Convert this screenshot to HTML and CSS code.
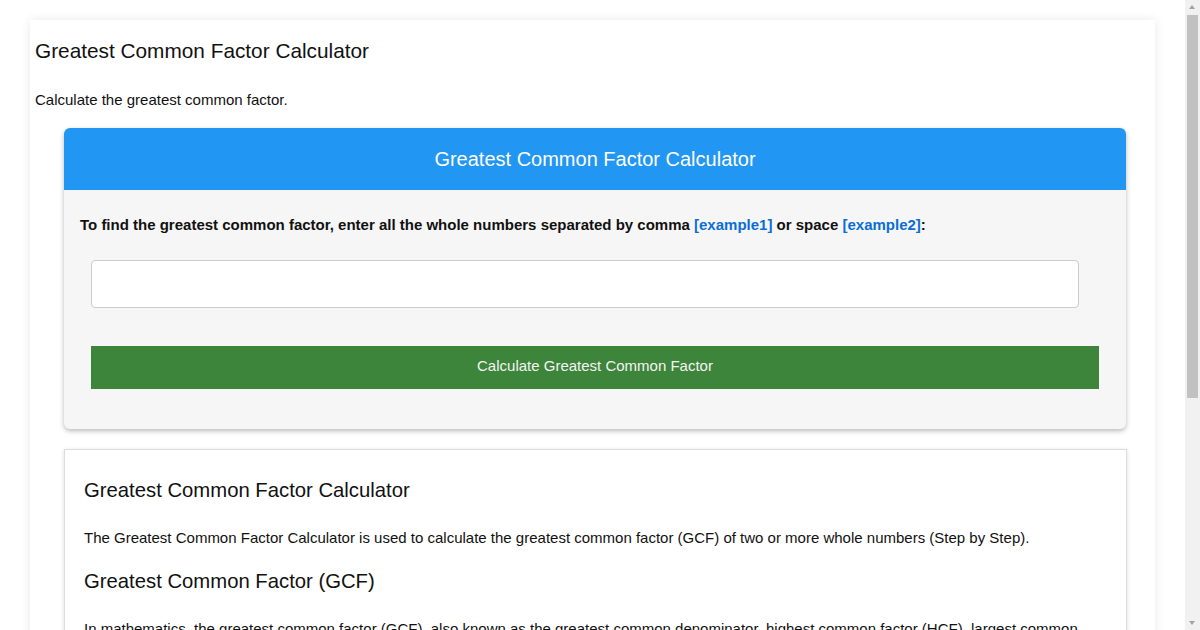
FILE: index.html
```html
<!DOCTYPE html>
<html lang="en">
<head>
<meta charset="utf-8">
<title>Greatest Common Factor Calculator</title>
<link rel="stylesheet" href="styles.css">
</head>
<body>
<div class="page">
  <h1 class="page-title">Greatest Common Factor Calculator</h1>
  <p class="intro">Calculate the greatest common factor.</p>

  <div class="calc-card">
    <div class="calc-header">Greatest Common Factor Calculator</div>
    <div class="calc-body">
      <p class="calc-label">To find the greatest common factor, enter all the whole numbers separated by comma <a href="#" class="ex-link">[example1]</a> or space <a href="#" class="ex-link">[example2]</a>:</p>
      <div class="calc-form">
        <input type="text" class="calc-input">
        <button type="button" class="calc-button">Calculate Greatest Common Factor</button>
      </div>
    </div>
  </div>

  <div class="info-box">
    <h2 class="info-title">Greatest Common Factor Calculator</h2>
    <p class="info-text">The Greatest Common Factor Calculator is used to calculate the greatest common factor (GCF) of two or more whole numbers (Step by Step).</p>
    <h2 class="info-title">Greatest Common Factor (GCF)</h2>
    <p class="info-text">In mathematics, the greatest common factor (GCF), also known as the greatest common denominator, highest common factor (HCF), largest common divisor or greatest common divisor (GCD), of two or more integers is the largest positive integer that divides each of the integers without a remainder.</p>
    <p class="info-text">For example, the greatest common factor of 8 and 12 is 4, since 4 is the largest number that divides both 8 and 12 evenly.</p>
    <h2 class="info-title">How to Find the Greatest Common Factor</h2>
    <p class="info-text">List all the factors of each number, then find the largest factor that appears in every list.</p>
  </div>
</div>

<div class="scrollbar" aria-hidden="true">
  <div class="sb-arrow sb-up"></div>
  <div class="sb-track"><div class="sb-thumb"></div></div>
  <div class="sb-arrow sb-down"></div>
</div>
</body>
</html>
```

FILE: styles.css
```css
html, body {
  margin: 0;
  padding: 0;
  background: #ffffff;
}

body {
  font-family: "Liberation Sans", Arial, sans-serif;
  color: #111;
  padding-right: 15px;
}

.page {
  margin: 20px 30px 20px 30px;
  padding: 19px 5px 30px 5px;
  background: #fff;
  box-shadow: 0 0 10px rgba(0, 0, 0, 0.09);
}

.page-title {
  margin: 0;
  font-size: 20.8px;
  line-height: 24px;
  font-weight: normal;
  color: #111;
}

.intro {
  margin: 28px 0 0 0;
  font-size: 15px;
  line-height: 18px;
}

.calc-card {
  margin: 19px 24px 0 29px;
  border-radius: 6px;
  background: #f6f6f6;
  box-shadow: 0 2px 5px rgba(0, 0, 0, 0.28);
  overflow: hidden;
}

.calc-header {
  height: 62px;
  line-height: 62px;
  text-align: center;
  background: #2196f3;
  color: #fff;
  font-size: 20px;
}

.calc-body {
  padding: 26px 16px 40px 16px;
}

.calc-label {
  margin: 0;
  font-size: 15px;
  line-height: 18px;
  font-weight: bold;
  color: #111;
}

.ex-link {
  color: #0b6ed6;
  text-decoration: none;
}

.calc-form {
  padding: 0 11px;
  display: flex;
  flex-direction: column;
  align-items: flex-start;
}

.calc-input {
  box-sizing: border-box;
  margin: 26px 0 0 0;
  width: calc(100% - 20px);
  height: 48px;
  border: 1px solid #cccccc;
  border-radius: 4px;
  background: #fff;
  font-family: inherit;
  font-size: 15px;
  padding: 0 10px;
}

.calc-button {
  box-sizing: border-box;
  margin: 38px 0 0 0;
  width: 100%;
  height: 43px;
  border: none;
  background: #3c853a;
  color: #f4f4f4;
  font-family: inherit;
  font-size: 15px;
  line-height: 40px;
  padding: 0 0 3px 0;
  cursor: pointer;
}

.info-box {
  margin: 20px 23px 0 29px;
  padding: 28px 19px 10px 19px;
  border: 1px solid #dcdcdc;
  background: #fff;
  box-shadow: 0 1px 4px rgba(0, 0, 0, 0.15);
}

.info-title {
  margin: 0;
  font-size: 20.3px;
  line-height: 24px;
  font-weight: normal;
  color: #111;
}

.info-text {
  margin: 27px 0 22px 0;
  font-size: 15px;
  line-height: 18px;
}

/* imitation of the browser's vertical scrollbar, pinned over the right edge */
.scrollbar {
  position: fixed;
  top: 0;
  right: 0;
  width: 15px;
  height: 100%;
  background: #f1f1f1;
  display: flex;
  flex-direction: column;
}

.sb-arrow {
  height: 15px;
  flex: none;
  position: relative;
}

.sb-arrow::after {
  content: "";
  position: absolute;
  left: 4px;
  width: 0;
  height: 0;
  border-left: 3.5px solid transparent;
  border-right: 3.5px solid transparent;
}

.sb-up::after {
  top: 5px;
  border-bottom: 4px solid #a3a3a3;
}

.sb-down::after {
  top: 6px;
  border-top: 4px solid #a3a3a3;
}

.sb-track {
  flex: 1;
  padding: 0 2px;
}

.sb-thumb {
  height: 383px;
  background: #c1c1c1;
}
```
